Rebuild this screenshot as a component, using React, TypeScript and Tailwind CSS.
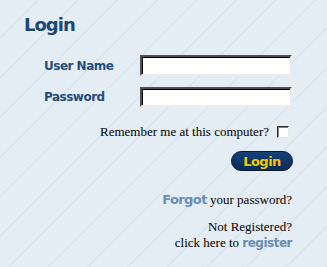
export default function App() {
  return (
    <div className="w-[327px] h-[267px] overflow-hidden bg-[#e4ecf4] bg-[repeating-linear-gradient(135deg,transparent_0px,transparent_26px,rgba(196,212,230,0.45)_27px,transparent_28px)] font-['DejaVu_Sans',sans-serif]">
      <div className="pt-[15px] pl-[24px]">
        <h1 className="text-[18px] leading-[20px] font-bold tracking-[-1px] text-[#1b4877]">Login</h1>
      </div>

      <div className="mt-[20px] flex flex-col gap-[11px] pl-[44px]">
        <div className="flex items-center">
          <label className="w-[96px] text-[12px] font-bold tracking-[-0.5px] text-[#1f4d7d]">User Name</label>
          <input
            type="text"
            className="w-[152px] h-[21px] bg-white border-2 border-t-[#505050] border-l-[#505050] border-b-[#ececec] border-r-[#ececec] shadow-[inset_1px_1px_0_#000] outline-none"
          />
        </div>
        <div className="flex items-center">
          <label className="w-[96px] text-[12px] font-bold tracking-[-0.5px] text-[#1f4d7d]">Password</label>
          <input
            type="password"
            className="w-[152px] h-[20px] bg-white border-2 border-t-[#505050] border-l-[#505050] border-b-[#ececec] border-r-[#ececec] shadow-[inset_1px_1px_0_#000] outline-none"
          />
        </div>
      </div>

      <div className="mt-[18px] pr-[38px] flex items-center justify-end gap-[8px]">
        <span className="font-['Liberation_Serif',serif] text-[13px] leading-[14px] text-black">
          Remember me at this computer?
        </span>
        <span className="w-[12px] h-[12px] bg-white border border-t-[#303030] border-l-[#303030] border-b-[#e8e8e8] border-r-[#e8e8e8] shadow-[inset_1px_1px_0_#808080]" />
      </div>

      <div className="mt-[12px] pr-[34px] flex justify-end">
        <button className="w-[62px] h-[20px] rounded-full bg-gradient-to-b from-[#134178] to-[#0a2b57] border border-[#061a36] text-[#f6c700] text-[13px] font-bold tracking-[-0.5px] leading-none">
          Login
        </button>
      </div>

      <div className="mt-[22px] pr-[35px] text-right">
        <p className="text-[13px] leading-[14px]">
          <span className="font-bold tracking-[-0.6px] text-[#6a8db6]">Forgot</span>
          <span className="font-['Liberation_Serif',serif] text-black"> your password?</span>
        </p>
      </div>

      <div className="mt-[12px] pr-[35px] text-right font-['Liberation_Serif',serif] text-[13px] leading-[16px] text-black">
        <p>Not Registered?</p>
        <p>
          click here to{" "}
          <span className="font-['DejaVu_Sans',sans-serif] text-[12px] font-bold tracking-[-0.5px] text-[#6a8db6]">register</span>
        </p>
      </div>
    </div>
  );
}
